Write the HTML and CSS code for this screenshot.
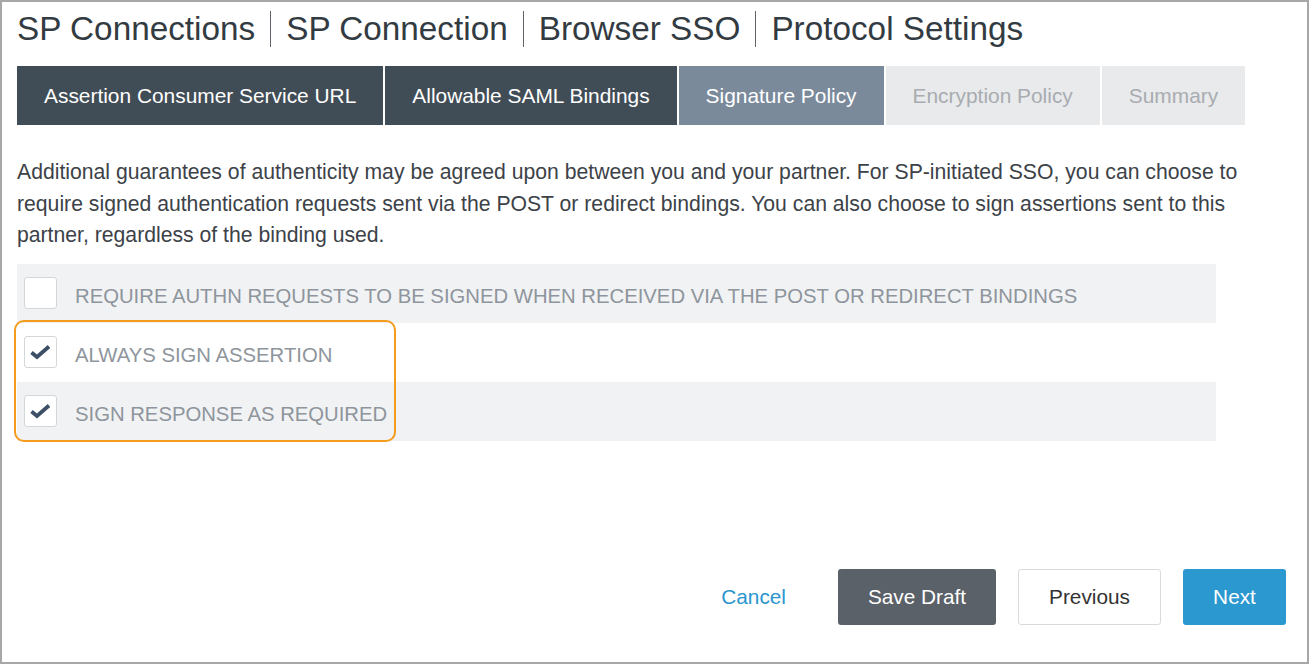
FILE: index.html
```html
<!doctype html>
<html>

<head>
    <title>Protocol Settings</title>
    <meta charset="utf-8">
    <link rel="stylesheet" href="styles.css">
</head>

<body>
    <div class="frame">
        <h1 class="crumbs">
            <span>SP Connections</span>
            <span>SP Connection</span>
            <span>Browser SSO</span>
            <span>Protocol Settings</span>
        </h1>

        <div class="steps">
            <span class="step done">Assertion Consumer Service URL</span>
            <span class="step done">Allowable SAML Bindings</span>
            <span class="step current">Signature Policy</span>
            <span class="step todo">Encryption Policy</span>
            <span class="step todo">Summary</span>
        </div>

        <p class="intro">Additional guarantees of authenticity may be agreed upon between you and your partner. For SP-initiated SSO, you can choose to require signed authentication requests sent via the POST or redirect bindings. You can also choose to sign assertions sent to this partner, regardless of the binding used.</p>

        <div class="options">
            <label class="option">
                <span class="box"></span>
                <span class="label">REQUIRE AUTHN REQUESTS TO BE SIGNED WHEN RECEIVED VIA THE POST OR REDIRECT BINDINGS</span>
            </label>
            <label class="option">
                <span class="box">
                    <svg viewBox="0 0 33 32" width="33" height="32"><polyline points="7.5,16.5 13,21 25,10.5" /></svg>
                </span>
                <span class="label">ALWAYS SIGN ASSERTION</span>
            </label>
            <label class="option">
                <span class="box">
                    <svg viewBox="0 0 33 32" width="33" height="32"><polyline points="7.5,16.5 13,21 25,10.5" /></svg>
                </span>
                <span class="label">SIGN RESPONSE AS REQUIRED</span>
            </label>
            <div class="marker"></div>
        </div>

        <div class="actions">
            <a class="cancel" href="#">Cancel</a>
            <span class="btn draft">Save Draft</span>
            <span class="btn prev">Previous</span>
            <span class="btn next">Next</span>
        </div>
    </div>
</body>

</html>
```

FILE: styles.css
```css
* {
    box-sizing: border-box;
}

body {
    margin: 0;
    background: #fff;
    font-family: "Liberation Sans", Arial, sans-serif;
}

.frame {
    width: 1309px;
    height: 664px;
    border: 2px solid #a7a7a7;
    padding: 7px 21px 0 15px;
}

/* breadcrumb title */
.crumbs {
    margin: 0;
    display: flex;
    align-items: center;
    font-size: 33.3px;
    font-weight: normal;
    line-height: 40px;
    color: #333b42;
}

.crumbs span + span {
    border-left: 1px solid #5d6368;
    margin-left: 15px;
    padding-left: 15px;
    line-height: 36px;
}

/* wizard tabs */
.steps {
    display: flex;
    gap: 2px;
    margin-top: 17px;
}

.step {
    height: 59px;
    padding: 0 27px;
    display: flex;
    align-items: center;
    font-size: 20.9px;
    white-space: nowrap;
}

.step.done {
    background: #414d56;
    color: #fff;
}

.step.current {
    background: #7a8a9b;
    color: #fff;
}

.step.todo {
    background: #e9eaec;
    color: #a8acb0;
}

.intro {
    max-width: 1250px;
    margin: 31px 0 0;
    font-size: 21.2px;
    line-height: 31.5px;
    color: #3c4248;
}

/* checkbox rows */
.options {
    position: relative;
    width: 1199px;
    margin-top: 13px;
}

.option {
    display: flex;
    align-items: center;
    height: 59px;
    padding-left: 7px;
}

.option:nth-child(odd) {
    background: #f1f2f4;
}

.box {
    width: 33px;
    height: 32px;
    flex: none;
    background: #fff;
    border: 1.5px solid #d4d7da;
    border-radius: 3px;
    display: flex;
    align-items: center;
    justify-content: center;
}

.box svg {
    margin: -1.5px;
}

.box polyline {
    fill: none;
    stroke: #3d4f66;
    stroke-width: 3.8;
}

.label {
    margin-left: 18px;
    padding-top: 6px;
    font-size: 20.3px;
    color: #8e959c;
}

.marker {
    position: absolute;
    left: -3px;
    top: 56px;
    width: 382px;
    height: 122px;
    border: 2px solid #f59c1c;
    border-radius: 10px;
}

/* footer buttons */
.actions {
    display: flex;
    justify-content: flex-end;
    align-items: center;
    gap: 22px;
    margin-top: 128px;
}

.cancel {
    color: #2a96cf;
    text-decoration: none;
    font-size: 20.8px;
    margin-right: 30px;
}

.btn {
    height: 56px;
    display: flex;
    align-items: center;
    justify-content: center;
    font-size: 20.8px;
    border-radius: 3px;
}

.btn.draft {
    width: 158px;
    background: #5a6168;
    color: #fff;
}

.btn.prev {
    width: 143px;
    background: #fff;
    border: 1.5px solid #dadada;
    color: #333;
}

.btn.next {
    width: 103px;
    background: #2b98d0;
    color: #fff;
}
```
